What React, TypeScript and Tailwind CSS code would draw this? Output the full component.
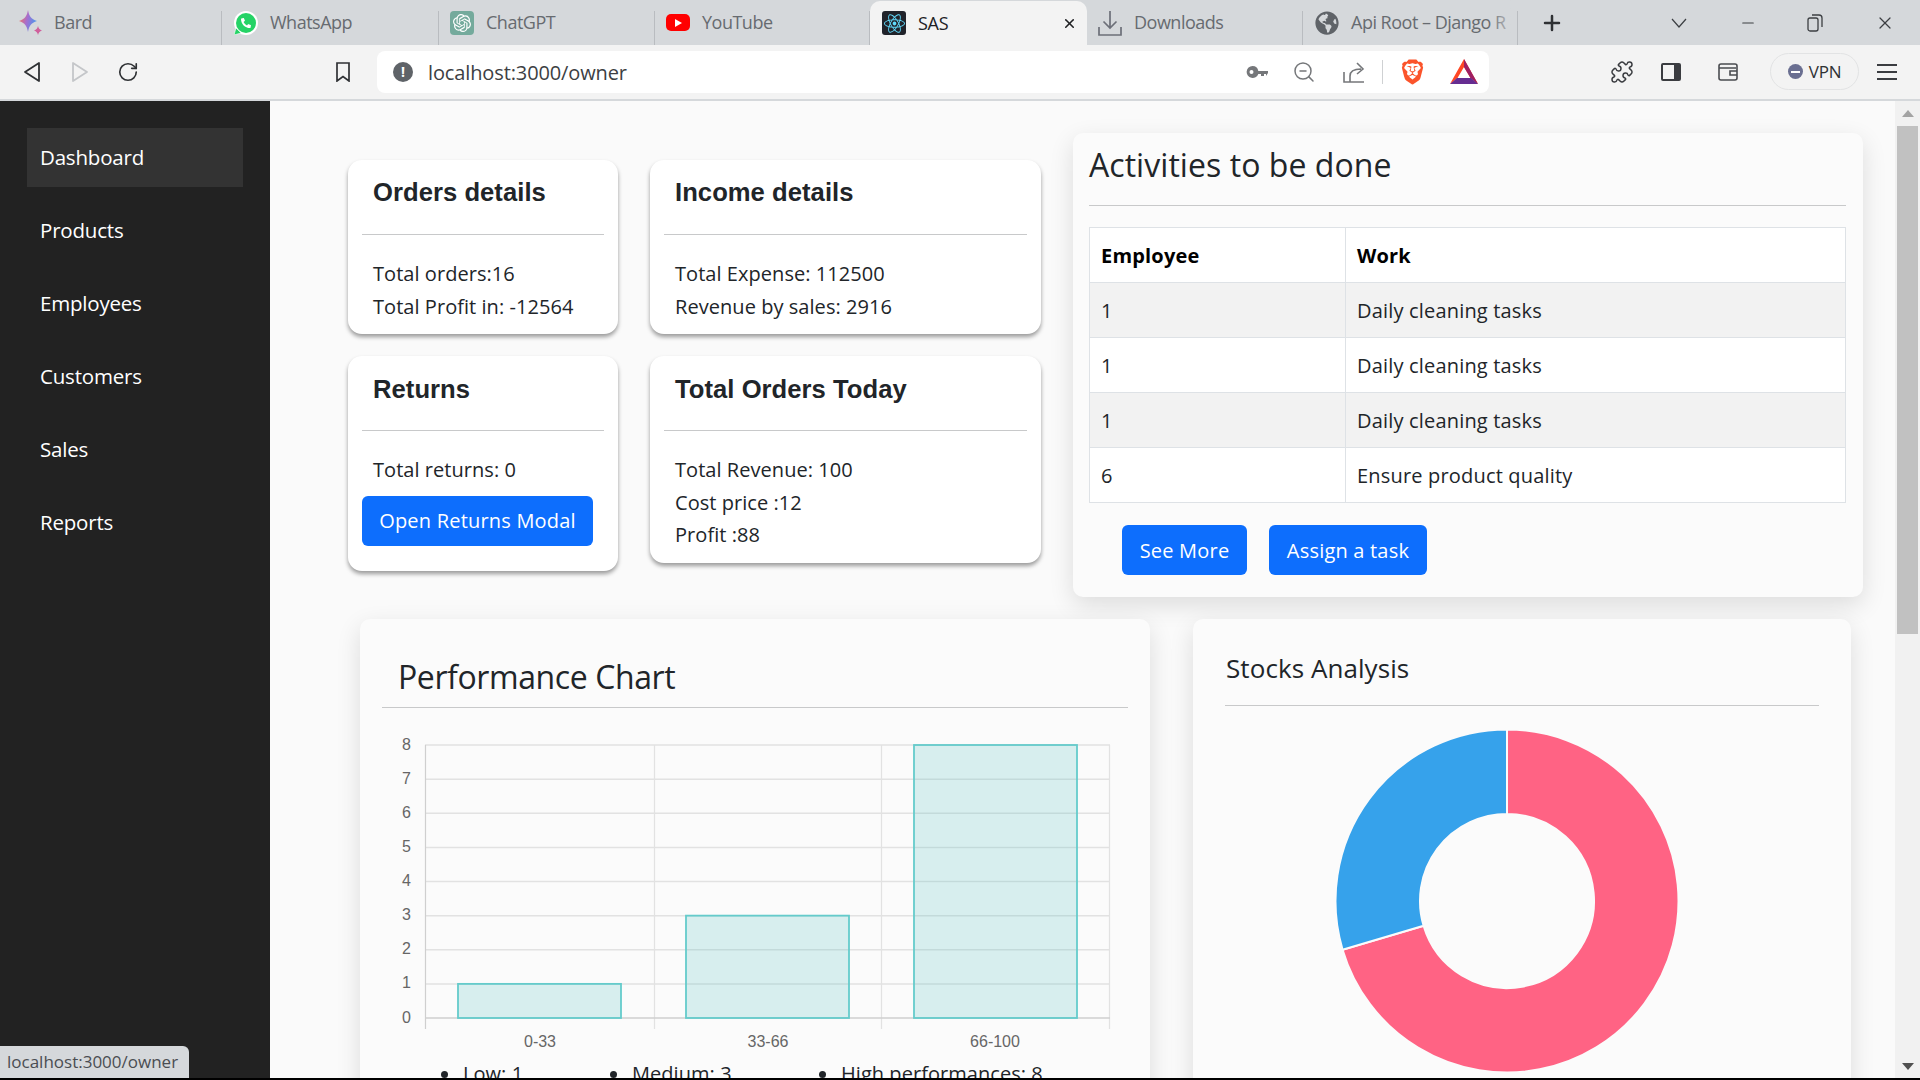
import { Minus, Plus, Puzzle, RotateCw, X, ZoomOut } from "lucide-react";
import { FaGlobeAmericas, FaPhoneAlt, FaReact } from "react-icons/fa";
import { SiBrave, SiOpenai } from "react-icons/si";

const UI_FONT = "font-['Open_Sans',sans-serif]";
const ARIAL = "'Liberation Sans', Arial, sans-serif";

function BardIcon() {
  return (
    <svg width="24" height="26" viewBox="0 0 24 26">
      <defs>
        <linearGradient id="bard" x1="0" y1="0.3" x2="1" y2="0.6">
          <stop offset="0" stopColor="#f5705c" />
          <stop offset="0.45" stopColor="#a56fd0" />
          <stop offset="1" stopColor="#3f9bf0" />
        </linearGradient>
      </defs>
      <path d="M10 0C11 6 13 9 19 11C13 13 11 16 10 22C9 16 7 13 1 11C7 9 9 6 10 0Z" fill="url(#bard)" />
      <path d="M20 16C20.500 18.500 21.500 19.500 24 20.500C21.500 21.500 20.500 22.500 20 25C19.500 22.500 18.500 21.500 16 20.500C18.500 19.500 19.500 18.500 20 16Z" fill="#d0609c" />
    </svg>
  );
}

function WhatsappIcon() {
  return (
    <span className="relative block w-6 h-6 rounded-full bg-white">
      <span className="absolute inset-[2px] rounded-full bg-[#25d366] flex items-center justify-center">
        <FaPhoneAlt className="w-[10px] h-[10px] text-white" />
      </span>
      <svg className="absolute left-0 bottom-0" width="8" height="8" viewBox="0 0 8 8">
        <path d="M0 8L2 1L7 6Z" fill="#25d366" stroke="#fff" strokeWidth="0.600" />
      </svg>
    </span>
  );
}

function ChatgptIcon() {
  return (
    <span className="w-6 h-6 rounded-[4px] bg-[#74aa9c] flex items-center justify-center">
      <SiOpenai className="w-[18px] h-[18px] text-white" />
    </span>
  );
}

function YoutubeIcon() {
  return (
    <span className="w-6 h-[17px] rounded-[5px] bg-[#f00] flex items-center justify-center">
      <svg width="7" height="8" viewBox="0 0 7 8">
        <path d="M0 0L7 4L0 8Z" fill="#fff" />
      </svg>
    </span>
  );
}

function ReactIcon() {
  return (
    <span className="w-6 h-6 rounded-[3px] bg-[#20232a] flex items-center justify-center">
      <FaReact className="w-[21px] h-[21px] text-[#61dafb]" />
    </span>
  );
}

function DownloadIcon() {
  return (
    <svg width="24" height="26" viewBox="0 0 24 26" fill="none" stroke="#6c6f78" strokeWidth="1.700">
      <path d="M12 1V18M5.500 11.500L12 18L18.500 11.500M1 17V25H23V17" />
    </svg>
  );
}

const tabs = [
  { title: "Bard", icon: <BardIcon />, width: "w-[217px]", pad: "pl-[13px]" },
  { title: "WhatsApp", icon: <WhatsappIcon />, width: "w-[217px]", pad: "pl-3" },
  { title: "ChatGPT", icon: <ChatgptIcon />, width: "w-[216px]", pad: "pl-[11px]" },
  { title: "YouTube", icon: <YoutubeIcon />, width: "w-[215px]", pad: "pl-[11px]" },
];

function Tab({
  title,
  icon,
  width,
  pad,
  fade,
}: {
  title: string;
  icon: React.ReactNode;
  width: string;
  pad: string;
  fade?: boolean;
}) {
  return (
    <div className={`${width} ${pad} h-full flex items-center gap-3 relative shrink-0 overflow-hidden`}>
      <span className="w-6 shrink-0 flex items-center">{icon}</span>
      <span className="text-[18px] text-[#676b70] tracking-[-0.5px] whitespace-nowrap">{title}</span>
      {fade && <span className="absolute right-[1px] top-0 bottom-0 w-7 bg-gradient-to-r from-transparent to-[#d5d8db]" />}
      <span className="absolute right-0 bottom-0 w-px h-[34px] bg-[#b9bcc0]" />
    </div>
  );
}

function TabStrip() {
  return (
    <div className="h-[45px] bg-[#d5d8db] flex items-stretch pl-[5px] shrink-0">
      {tabs.map((t) => (
        <Tab key={t.title} {...t} />
      ))}
      <div className="w-[217px] shrink-0 bg-[#f3f3f3] rounded-t-[10px] flex items-center pl-3 pr-[10px] gap-3 mt-[1px]">
        <ReactIcon />
        <span className="text-[18px] text-[#202124] tracking-[-0.3px] flex-1">SAS</span>
        <X className="w-[15px] h-[15px] text-[#202124]" strokeWidth={2.500} />
      </div>
      <Tab title="Downloads" icon={<DownloadIcon />} width="w-[216px]" pad="pl-[11px]" />
      <Tab
        title="Api Root – Django R"
        icon={<FaGlobeAmericas className="w-6 h-6 text-[#5f6368]" />}
        width="w-[215px]"
        pad="pl-3"
        fade
      />
      <div className="w-[68px] flex items-center justify-center">
        <Plus className="w-6 h-6 text-[#2f3134]" strokeWidth={2.500} />
      </div>
      <div className="flex-1 flex items-center pl-[85px] text-[#3c3f43]">
        <svg width="16" height="10" viewBox="0 0 16 10" fill="none" stroke="currentColor" strokeWidth="1.200">
          <path d="M1 1L8 9L15 1" />
        </svg>
        <Minus className="w-[18px] h-[18px] ml-[52px]" strokeWidth={1.500} />
        <svg className="ml-[50px]" width="16" height="18" viewBox="0 0 16 18" fill="none" stroke="currentColor" strokeWidth="1.300">
          <rect x="1" y="4" width="10" height="13" rx="2" />
          <path d="M5 1H12C14 1 15 2 15 4V13" />
        </svg>
        <X className="w-5 h-5 ml-[52px]" strokeWidth={1.500} />
      </div>
    </div>
  );
}

function BatIcon() {
  return (
    <svg width="28" height="26" viewBox="0 0 28 26">
      <path d="M14 0L28 25L20.500 19L14 8L7.500 19L0 25Z" fill="#ff4724" />
      <path d="M14 0L28 25L20.500 19L14 8Z" fill="#9e1f63" />
      <path d="M0 25L7 19H21L28 25Z" fill="#662d91" />
    </svg>
  );
}

function Toolbar() {
  return (
    <div className="h-[56px] bg-[#f3f3f3] border-b-2 border-[#d5d8db] flex items-center shrink-0 pb-[1px]">
      <svg className="ml-[24px]" width="16" height="20" viewBox="0 0 16 20" fill="none" stroke="#2f3134" strokeWidth="1.800" strokeLinejoin="round">
        <path d="M15 1V19L1 10Z" />
      </svg>
      <svg className="ml-[32px]" width="16" height="20" viewBox="0 0 16 20" fill="none" stroke="#c4c6c9" strokeWidth="1.800" strokeLinejoin="round">
        <path d="M1 1V19L15 10Z" />
      </svg>
      <RotateCw className="w-[22px] h-[22px] ml-[29px] text-[#2f3134]" strokeWidth={1.800} />
      <svg className="ml-[197px]" width="14" height="20" viewBox="0 0 14 20" fill="none" stroke="#2f3134" strokeWidth="1.700">
        <path d="M1 1H13V19L7 14.500L1 19Z" />
      </svg>
      <div className="ml-[27px] w-[1112px] h-[42px] bg-white rounded-lg flex items-center pl-4 pr-[11px]">
        <span className="w-5 h-5 rounded-full bg-[#5f6368] text-white text-[14px] font-bold flex items-center justify-center leading-none">!</span>
        <span className="ml-[15px] text-[20px] text-[#3c4043] tracking-[-0.12px] pt-[2px]">localhost:3000/owner</span>
        <svg className="ml-auto" width="22" height="14" viewBox="0 0 22 14" fill="#75777a">
          <path d="M6.500 1A6 6 0 1 0 12.300 9H15V11H18V9H20V11L22 8V6H12.300A6 6 0 0 0 6.500 1ZM5.500 5A2 2 0 1 1 5.500 9A2 2 0 0 1 5.500 5Z" />
        </svg>
        <ZoomOut className="w-6 h-6 ml-[24px] text-[#75777a]" strokeWidth={1.500} />
        <svg className="ml-[27px]" width="22" height="24" viewBox="0 0 22 24" fill="none" stroke="#75777a" strokeWidth="1.600">
          <path d="M7 22V16C7 12 10 9 18 9M14 3L20 9L14 14M1 12V22H21" />
        </svg>
        <span className="ml-[17px] w-px h-[24px] bg-[#cfd1d3]" />
        <SiBrave className="w-[25px] h-[28px] ml-[17px] text-[#fb542b]" />
        <span className="ml-[25px]">
          <BatIcon />
        </span>
      </div>
      <Puzzle className="w-6 h-6 ml-[121px] text-[#3a3c40]" strokeWidth={1.500} />
      <span className="ml-[27px] w-5 h-[18px] rounded-[2px] border-2 border-[#3a3c40] border-r-[7px]" />
      <svg className="ml-[37px]" width="20" height="18" viewBox="0 0 20 18" fill="none" stroke="#4a4c50" strokeWidth="1.600">
        <rect x="1" y="1" width="18" height="16" rx="2" />
        <path d="M1 5H18M19 8H12V12H19" />
      </svg>
      <div className="ml-[32px] w-[89px] h-[37px] rounded-full border border-[#e2e3e4] flex items-center justify-center gap-[6px]">
        <span className="w-[15px] h-[15px] rounded-full bg-[#6a6f91] flex items-center justify-center">
          <span className="w-[9px] h-[2px] bg-white" />
        </span>
        <span className="text-[17px] text-[#2f3134] tracking-[-0.2px]">VPN</span>
      </div>
      <div className="ml-[18px] w-5 flex flex-col gap-[5px]">
        <span className="h-[2px] bg-[#3a3c40]" />
        <span className="h-[2px] bg-[#3a3c40]" />
        <span className="h-[2px] bg-[#3a3c40]" />
      </div>
    </div>
  );
}

const navItems = ["Dashboard", "Products", "Employees", "Customers", "Sales", "Reports"];

function Sidebar() {
  return (
    <aside className="w-[270px] shrink-0 bg-[#222222] pt-[27px] px-[27px] flex flex-col gap-[14px]">
      {navItems.map((item, i) => (
        <div
          key={item}
          className={`h-[59px] flex items-center pl-[13px] text-[20.500px] text-white tracking-[-0.2px] ${
            i === 0 ? "bg-[#333333]" : ""
          }`}
        >
          {item}
        </div>
      ))}
    </aside>
  );
}

function DetailCard({
  title,
  className,
  titlePad = "pt-[15px]",
  children,
}: {
  title: string;
  className: string;
  titlePad?: string;
  children: React.ReactNode;
}) {
  return (
    <div className={`bg-white rounded-[14px] shadow-[0_3px_4px_rgba(0,0,0,0.38)] px-[14px] ${className}`}>
      <h3
        className={`h-[75px] pl-[11px] ${titlePad} text-[25.600px] font-bold text-[#212529] leading-[34px] tracking-[0.05px] border-b border-[#c8c9ca]`}
        style={{ fontFamily: ARIAL }}
      >
        {title}
      </h3>
      <div className="pl-[11px] pt-[23px] text-[20px] leading-[32.500px] text-[#212529] tracking-[0.05px]">
        {children}
      </div>
    </div>
  );
}

const tasks = [
  { employee: "1", work: "Daily cleaning tasks" },
  { employee: "1", work: "Daily cleaning tasks" },
  { employee: "1", work: "Daily cleaning tasks" },
  { employee: "6", work: "Ensure product quality" },
];

function BlueButton({ className, children }: { className: string; children: React.ReactNode }) {
  return (
    <button className={`h-[50px] pt-[2px] bg-[#0d6efd] text-white text-[20px] tracking-[0.2px] rounded-[6px] ${className}`}>
      {children}
    </button>
  );
}

function ActivitiesCard() {
  return (
    <div className="w-[790px] h-[464px] ml-[32px] bg-[#fbfbfb] rounded-[10px] shadow-[0_8px_24px_rgba(0,0,0,0.12)] pl-4">
      <h2 className="w-[757px] h-[73px] pt-[8px] text-[32px] leading-[48px] text-[#212529] tracking-[0.05px] border-b border-[#c8c9ca]">
        Activities to be done
      </h2>
      <table className="mt-[21px] w-[757px] table-fixed border-collapse bg-white text-[20px] text-[#212529] tracking-[0.18px]">
        <colgroup>
          <col className="w-[256px]" />
          <col />
        </colgroup>
        <thead>
          <tr className="h-[55px]">
            <th className="border border-[#dee2e6] pl-[11px] pt-[2px] text-left font-bold text-black">Employee</th>
            <th className="border border-[#dee2e6] pl-[11px] pt-[2px] text-left font-bold text-black">Work</th>
          </tr>
        </thead>
        <tbody>
          {tasks.map((task, i) => (
            <tr key={i} className={`h-[55px] ${i % 2 === 0 ? "bg-[#f2f2f2]" : "bg-white"}`}>
              <td className="border border-[#dee2e6] pl-[11px] pt-[2px]">{task.employee}</td>
              <td className="border border-[#dee2e6] pl-[11px] pt-[2px]">{task.work}</td>
            </tr>
          ))}
        </tbody>
      </table>
      <div className="mt-[22px] ml-[33px] flex gap-[22px]">
        <BlueButton className="w-[125px]">See More</BlueButton>
        <BlueButton className="w-[158px]">Assign a task</BlueButton>
      </div>
    </div>
  );
}

const TOP = 745;
const BOTTOM = 1018;
const STEP = (BOTTOM - TOP) / 8;
const bars = [
  { label: "0-33", value: 1, x: 458, cx: 540 },
  { label: "33-66", value: 3, x: 686, cx: 768 },
  { label: "66-100", value: 8, x: 914, cx: 995 },
];

function BarChart() {
  const vLines = [425.5, 654.5, 881.5, 1109.5];
  return (
    <svg className="block mt-[21px]" width="746" height="329" viewBox="382 729 746 329">
      {[1, 2, 3, 4, 5, 6, 7, 8].map((n) => (
        <line key={n} x1="425" x2="1110" y1={BOTTOM - n * STEP} y2={BOTTOM - n * STEP} stroke="#e2e2e2" strokeWidth="1.500" />
      ))}
      {vLines.map((x, i) => (
        <line key={x} x1={x} x2={x} y1={TOP} y2="1029" stroke={i === 0 ? "#cfcfcf" : "#e2e2e2"} strokeWidth="1.200" />
      ))}
      <line x1="425" x2="1110" y1={BOTTOM} y2={BOTTOM} stroke="#cfcfcf" strokeWidth="1.500" />
      {bars.map((b) => (
        <rect
          key={b.label}
          x={b.x}
          y={BOTTOM - b.value * STEP}
          width="163"
          height={b.value * STEP}
          fill="rgba(75,192,192,0.2)"
          stroke="rgb(100,203,203)"
          strokeWidth="1.800"
        />
      ))}
      {[0, 1, 2, 3, 4, 5, 6, 7, 8].map((n) => (
        <text key={n} x="411" y={BOTTOM - n * STEP + 4.500} textAnchor="end" fontSize="16" fill="#666" fontFamily={ARIAL}>
          {n}
        </text>
      ))}
      {bars.map((b) => (
        <text key={b.label} x={b.cx} y="1047" textAnchor="middle" fontSize="16" fill="#666" fontFamily={ARIAL}>
          {b.label}
        </text>
      ))}
    </svg>
  );
}

const legend = [
  { text: "Low: 1", className: "ml-[59px] w-[169px]" },
  { text: "Medium: 3", className: "w-[209px]" },
  { text: "High performances: 8", className: "" },
];

function PerformanceCard() {
  return (
    <div className="w-[790px] h-[600px] ml-[12px] bg-[#fbfbfb] rounded-[10px] shadow-[0_8px_24px_rgba(0,0,0,0.12)] px-[22px]">
      <h2 className="h-[89px] pt-[34px] pl-[16px] text-[32px] leading-[48px] text-[#212529] tracking-[-0.4px] border-b border-[#c8c9ca]">
        Performance Chart
      </h2>
      <BarChart />
      <ul className="flex text-[20px] leading-[32px] text-[#212529] tracking-[0.05px]">
        {legend.map((l) => (
          <li key={l.text} className={`flex items-center gap-[15px] ${l.className}`}>
            <span className="w-[7px] h-[7px] rounded-full bg-[#212529]" />
            {l.text}
          </li>
        ))}
      </ul>
    </div>
  );
}

function ringSlice(from: number, to: number, R: number, r: number, cx: number, cy: number) {
  const pt = (rad: number, deg: number) => {
    const a = (deg * Math.PI) / 180;
    return `${cx + rad * Math.sin(a)} ${cy - rad * Math.cos(a)}`;
  };
  const large = to - from > 180 ? 1 : 0;
  return `M${pt(R, from)} A${R} ${R} 0 ${large} 1 ${pt(R, to)} L${pt(r, to)} A${r} ${r} 0 ${large} 0 ${pt(r, from)} Z`;
}

function StocksCard() {
  return (
    <div className="w-[658px] h-[600px] ml-[43px] bg-[#fbfbfb] rounded-[10px] shadow-[0_8px_24px_rgba(0,0,0,0.12)] px-[32px]">
      <h2 className="h-[87px] pt-[29px] text-[26px] leading-[40px] text-[#212529] tracking-[0.07px] border-b border-[#c8c9ca] pl-px">
        Stocks Analysis
      </h2>
      <svg className="block mt-[10px]" width="593" height="360" viewBox="1225 716 593 360">
        <path d={ringSlice(0, 253.5, 171.5, 87, 1507, 901)} fill="#ff6384" stroke="#fbfbfb" strokeWidth="2" />
        <path d={ringSlice(253.5, 360, 171.5, 87, 1507, 901)} fill="#36a2eb" stroke="#fbfbfb" strokeWidth="2" />
      </svg>
    </div>
  );
}

function Scrollbar() {
  return (
    <div className="w-[25px] shrink-0 bg-[#f1f1f1] flex flex-col items-center pt-[9px]">
      <svg width="12" height="7" viewBox="0 0 12 7">
        <path d="M6 0L12 7H0Z" fill="#a3a3a3" />
      </svg>
      <div className="mt-[9px] w-[21px] h-[508px] bg-[#c1c1c1]" />
      <svg className="mt-[429px]" width="12" height="7" viewBox="0 0 12 7">
        <path d="M0 0H12L6 7Z" fill="#505050" />
      </svg>
    </div>
  );
}

export default function App() {
  return (
    <div className={`relative w-[1920px] h-[1080px] overflow-hidden flex flex-col bg-black ${UI_FONT}`}>
      <TabStrip />
      <Toolbar />
      <div className="flex h-[977px] overflow-hidden">
        <Sidebar />
        <main className="flex-1 bg-[#fafafa] overflow-hidden pt-8 pl-[78px]">
          <div className="flex items-start">
            <div className="w-[693px] mt-[27px] grid grid-cols-[270px_391px] gap-x-8 gap-y-[22px] items-start">
              <DetailCard title="Orders details" className="h-[174px]">
                <p>Total orders:16</p>
                <p>Total Profit in: -12564</p>
              </DetailCard>
              <DetailCard title="Income details" className="h-[174px]">
                <p>Total Expense: 112500</p>
                <p>Revenue by sales: 2916</p>
              </DetailCard>
              <DetailCard title="Returns" className="h-[215px]" titlePad="pt-[16px]">
                <p>Total returns: 0</p>
                <BlueButton className="w-[231px] mt-[9px] -ml-[11px] block">Open Returns Modal</BlueButton>
              </DetailCard>
              <DetailCard title="Total Orders Today" className="h-[207px]" titlePad="pt-[16px]">
                <p>Total Revenue: 100</p>
                <p>Cost price :12</p>
                <p>Profit :88</p>
              </DetailCard>
            </div>
            <ActivitiesCard />
          </div>
          <div className="flex mt-[22px]">
            <PerformanceCard />
            <StocksCard />
          </div>
        </main>
        <Scrollbar />
      </div>
      <div className="absolute left-0 bottom-[2px] w-[189px] h-8 bg-[#d5d8db] rounded-tr-[6px] pl-[7px] flex items-center text-[17px] text-[#4a4d52]">
        localhost:3000/owner
      </div>
    </div>
  );
}
